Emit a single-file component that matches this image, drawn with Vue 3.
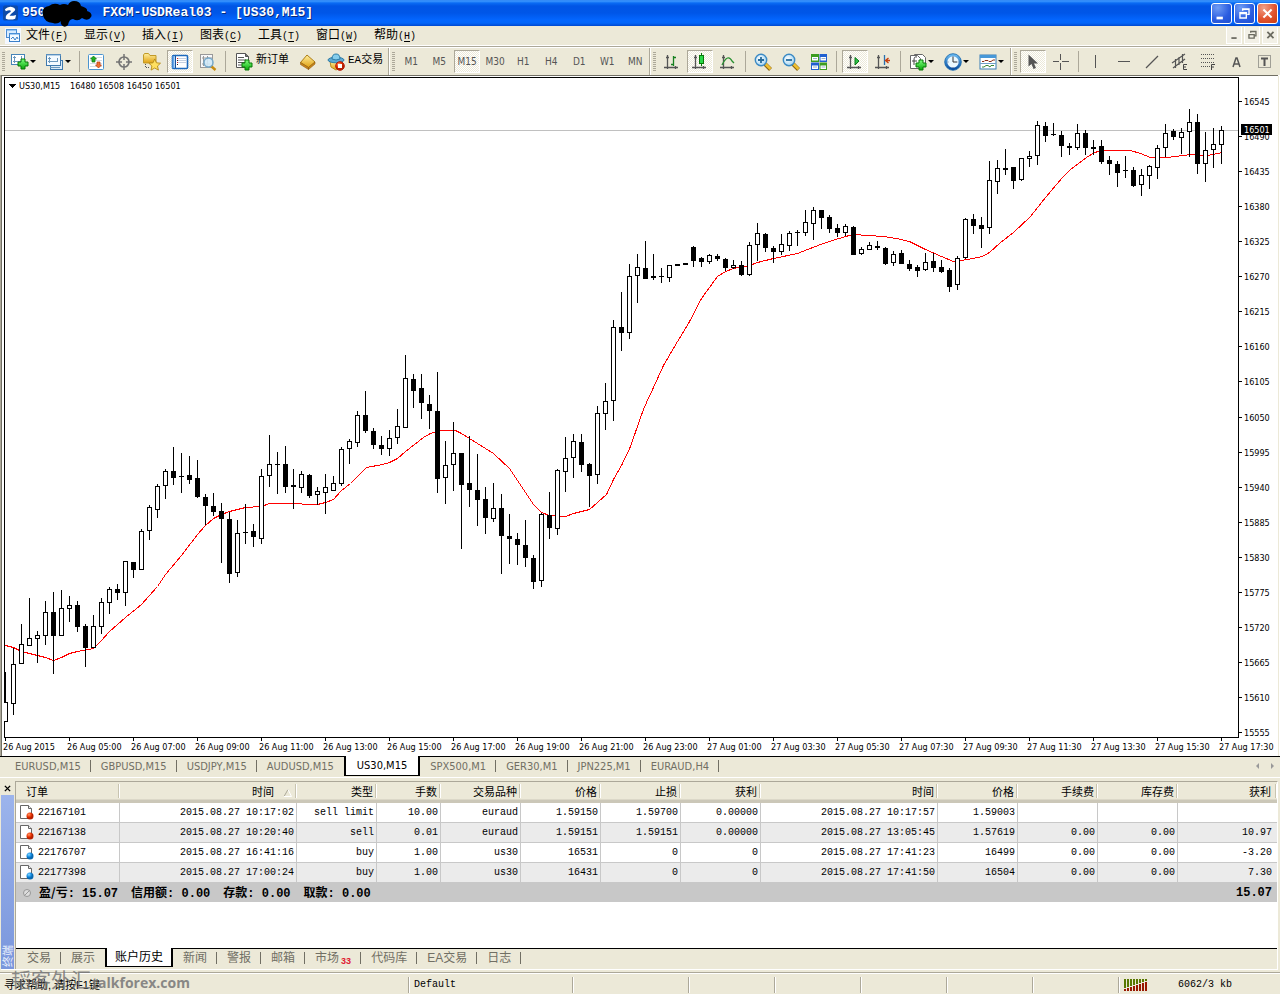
<script setup>
// Each candle: high, body top, body bottom, low, filled (1 = bearish)
const raw = `672 702 721 721 0|648 664 703 714 0|624 644 663 663 0|598 638 645 645 0|631 635 638 662 0|601 612 635 644 0|592 612 635 673 1|590 608 635 635 0|596 605 608 621 0|601 605 626 631 1|624 626 647 666 1|615 626 647 647 0|598 602 626 633 0|587 589 602 613 0|584 589 592 599 1|561 561 592 605 0|562 562 569 577 1|529 531 569 569 0|505 507 530 539 0|484 486 509 517 0|469 471 485 498 0|447 471 477 484 1|453 476 476 492 1|456 475 479 483 1|460 478 496 497 1|494 497 505 524 1|493 506 511 515 1|503 511 518 562 1|512 519 573 582 1|520 533 572 576 0|504 532 532 543 1|524 531 536 546 1|469 476 538 543 0|435 464 475 486 0|452 464 464 493 1|446 464 486 492 1|469 485 486 508 1|471 474 487 492 0|474 475 495 497 1|487 491 494 504 0|474 487 492 513 0|476 483 490 490 0|447 449 483 485 0|439 441 448 463 0|411 415 442 446 0|391 415 430 432 1|428 431 444 448 1|436 445 448 454 1|430 438 448 455 0|409 426 437 443 0|355 378 427 427 0|374 379 390 407 1|374 388 402 418 1|395 404 410 428 1|372 411 478 492 1|441 465 477 503 0|422 453 464 490 0|453 453 484 548 1|436 483 489 506 1|454 490 499 525 1|487 499 517 533 1|483 508 518 521 0|494 508 535 573 1|514 536 538 563 1|533 539 544 564 1|520 545 557 566 1|555 558 581 588 1|513 514 580 586 0|492 515 527 538 1|469 470 528 534 0|437 458 471 491 0|434 441 457 477 0|434 442 464 471 1|463 464 475 506 1|406 413 474 483 0|383 401 413 429 0|320 327 400 420 0|292 327 332 350 1|264 276 332 338 0|254 267 275 302 0|241 268 278 278 1|254 276 277 279 1|268 276 276 282 1|265 265 277 281 0|264 264 265 265 1|263 263 264 264 1|246 247 260 266 1|257 258 261 266 1|254 255 261 263 0|254 256 258 260 1|258 259 267 270 1|260 265 267 268 0|261 265 274 275 1|242 245 274 275 0|223 233 244 260 0|233 234 247 251 1|246 248 251 262 1|234 244 251 254 0|231 233 245 250 0|230 232 232 245 1|210 222 232 235 0|207 210 223 239 0|210 210 217 228 1|215 217 228 232 1|224 228 232 236 1|224 226 232 235 0|226 227 254 254 1|247 249 253 254 0|242 245 249 249 0|241 246 247 249 1|247 248 263 264 1|251 254 262 265 0|250 253 263 263 1|260 264 268 270 1|265 267 270 276 1|253 262 269 270 0|253 261 267 271 1|260 267 271 272 1|268 270 286 291 1|256 258 284 289 0|218 219 257 258 0|214 219 225 233 1|217 225 228 247 1|161 180 227 233 0|160 168 181 193 0|149 168 169 174 1|167 167 180 188 1|158 158 179 180 0|151 156 158 166 0|121 125 155 164 0|122 126 135 141 1|123 134 134 135 1|131 135 145 156 1|143 146 147 154 1|124 133 147 149 0|130 133 147 154 1|140 147 148 154 1|140 146 161 163 1|156 160 163 174 1|161 164 172 186 1|156 170 170 177 1|167 170 185 186 1|169 175 184 195 0|165 166 175 188 0|145 148 167 178 0|124 133 147 156 0|129 131 136 139 1|128 132 137 153 0|109 122 131 156 0|114 122 163 173 1|132 150 163 181 0|128 144 149 167 0|126 130 144 163 0`
const candles = raw.split('|').map((row, i) => {
  const [h, t, b, l, f] = row.split(' ').map(Number)
  return { x: 5 + i * 8, h, t, b, l, f }
})
const average = '5,645 13,647 21,651 29,653 37,655 45,657 53,660 61,657 69,653 77,651 93,648 101,640 109,631 125,617 141,604 157,586 165,574 181,555 197,534 205,525 213,518 221,514 229,511 245,507 261,506 269,503 285,503 317,504 325,502 333,499 341,490 350,483 366,467 382,464 389,462 397,458 405,451 423,437 430,433 440,430 455,430 461,433 469,438 493,453 509,468 525,492 533,504 541,512 549,515 565,516 573,513 589,509 597,502 606,494 613,479 621,465 630,446 639,420 643,409 646,402 653,387 663,365 677,341 688,323 701,298 717,276 725,271 733,268 749,265 757,262 773,258 797,253 820,244 832,240 845,236 853,234 883,236 896,238 909,241 925,249 941,256 953,261 967,259 982,256 989,252 1000,242 1013,232 1030,216 1045,197 1062,177 1070,169 1086,157 1094,152 1102,150 1130,150 1140,153 1150,157 1167,157 1190,154 1207,155 1222,152'
const prices = Array.from({ length: 19 }, (_, i) => ({ v: 16545 - i * 55, y: Math.round(101 + i * 35.06) }))
const times = ['26 Aug 2015', '26 Aug 05:00', '26 Aug 07:00', '26 Aug 09:00', '26 Aug 11:00', '26 Aug 13:00', '26 Aug 15:00', '26 Aug 17:00', '26 Aug 19:00', '26 Aug 21:00', '26 Aug 23:00', '27 Aug 01:00', '27 Aug 03:30', '27 Aug 05:30', '27 Aug 07:30', '27 Aug 09:30', '27 Aug 11:30', '27 Aug 13:30', '27 Aug 15:30', '27 Aug 17:30']

const menus = [['文件', 'F'], ['显示', 'V'], ['插入', 'I'], ['图表', 'C'], ['工具', 'T'], ['窗口', 'W'], ['帮助', 'H']]
const groups = [
  [{ i: 'newchart', d: 1 }, { i: 'profiles', d: 1 }, { s: 1, k: 'thin' }, { i: 'market' }, { i: 'target' }, { i: 'folder' }, { i: 'terminal', on: 1 }, { i: 'tester' }, { s: 1 }, { i: 'order', t: '新订单' }, { i: 'editor' }, { i: 'ea', t: 'EA交易' }],
  ['M1', 'M5', 'M15', 'M30', 'H1', 'H4', 'D1', 'W1', 'MN'].map(p => ({ p, on: p === 'M15' })),
  [{ i: 'bars' }, { i: 'candles', on: 1 }, { i: 'line' }, { s: 1, k: 'mid' }, { i: 'zoomin' }, { i: 'zoomout' }, { i: 'tile' }, { s: 1 }, { i: 'scroll', on: 1 }, { i: 'shift' }, { s: 1 }, { i: 'indicator', d: 1 }, { i: 'clock', d: 1 }, { i: 'template', d: 1 }],
  [{ i: 'cursor', on: 1 }, { i: 'cross' }, { s: 1, k: 'mid' }, { i: 'vline' }, { i: 'hline' }, { i: 'trend' }, { i: 'channel' }, { i: 'fibo' }, { i: 'text' }, { i: 'label' }]
]
const chartTabs = ['EURUSD,M15', 'GBPUSD,M15', 'USDJPY,M15', 'AUDUSD,M15', 'US30,M15', 'SPX500,M1', 'GER30,M1', 'JPN225,M1', 'EURAUD,H4']
const heads = ['订单', '时间', '类型', '手数', '交易品种', '价格', '止损', '获利', '时间', '价格', '手续费', '库存费', '获利']
const rows = [
  ['22167101', '2015.08.27 10:17:02', 'sell limit', '10.00', 'euraud', '1.59150', '1.59700', '0.00000', '2015.08.27 10:17:57', '1.59003', '', '', ''],
  ['22167138', '2015.08.27 10:20:40', 'sell', '0.01', 'euraud', '1.59151', '1.59151', '0.00000', '2015.08.27 13:05:45', '1.57619', '0.00', '0.00', '10.97'],
  ['22176707', '2015.08.27 16:41:16', 'buy', '1.00', 'us30', '16531', '0', '0', '2015.08.27 17:41:23', '16499', '0.00', '0.00', '-3.20'],
  ['22177398', '2015.08.27 17:00:24', 'buy', '1.00', 'us30', '16431', '0', '0', '2015.08.27 17:41:50', '16504', '0.00', '0.00', '7.30']
]
const totals = [['盈/亏', '15.07'], ['信用额', '0.00'], ['存款', '0.00'], ['取款', '0.00']]
const panelTabs = ['交易', '展示', '账户历史', '新闻', '警报', '邮箱', '市场', '代码库', 'EA交易', '日志']
</script>

<template>
  <div class="app">
    <svg class="defs" width="0" height="0" aria-hidden="true">
      <defs>
        <linearGradient id="g-green" x1="0" y1="0" x2="0" y2="1"><stop offset="0" stop-color="#7dff7d" /><stop offset="1" stop-color="#08a808" /></linearGradient>
        <linearGradient id="g-gold" x1="0" y1="0" x2="0" y2="1"><stop offset="0" stop-color="#fff0a0" /><stop offset="1" stop-color="#e0a010" /></linearGradient>
        <linearGradient id="g-blue" x1="0" y1="0" x2="0" y2="1"><stop offset="0" stop-color="#6ab8ee" /><stop offset="1" stop-color="#0a4fa0" /></linearGradient>
        <radialGradient id="g-lens" cx=".4" cy=".4"><stop offset="0" stop-color="#fff" /><stop offset="1" stop-color="#b4dcf4" /></radialGradient>
        <radialGradient id="g-red" cx=".35" cy=".3"><stop offset="0" stop-color="#ff9c70" /><stop offset=".6" stop-color="#f03c08" /><stop offset="1" stop-color="#b82000" /></radialGradient>
        <radialGradient id="g-dot" cx=".35" cy=".3"><stop offset="0" stop-color="#8cdcff" /><stop offset=".6" stop-color="#1890e8" /><stop offset="1" stop-color="#0868b0" /></radialGradient>
      </defs>
      <symbol id="plus" viewBox="0 0 12 12"><path d="M4 1h4v3h3v4H8v3H4V8H1V4h3z" fill="url(#g-green)" stroke="#087808" /></symbol>
      <symbol id="i-newchart" viewBox="0 0 18 18"><rect x=".5" y="1.500" width="13" height="10" fill="#fff" stroke="#4684b8" /><path d="M3.500 3v7M2 4.500h3M2 8.500h9M10.500 3v4" stroke="#6c98bc" fill="none" /><use href="#plus" x="6" y="5" width="12" height="12" /></symbol>
      <symbol id="i-profiles" viewBox="0 0 18 18"><rect x="4.500" y="7.500" width="12" height="9" fill="#dcecf8" stroke="#3f79ad" /><rect x=".5" y="1.500" width="14" height="11" fill="#f4faff" stroke="#3f79ad" /><path d="M0 2h15" stroke="#78a8d0" /><path d="M3.500 4v6M2 5.500h3M2 8.500h10M11.500 5v4M4 14.500h10" stroke="#6c98bc" fill="none" /></symbol>
      <symbol id="i-market" viewBox="0 0 18 18"><rect x="1.500" y="1.500" width="15" height="15" rx="1" fill="#fff" stroke="#4b94cf" /><path d="M3 4.500h12M3 7.500h12M3 10.500h12M3 13.500h12" stroke="#d4dce4" /><path d="M6.500 3L9.500 6H8v3H5V6H3.500z" fill="#20b020" stroke="#107810" stroke-width=".7" /><path d="M11.500 15l-3-3H10V9h3v3h1.500z" fill="#f07030" stroke="#b83808" stroke-width=".7" /></symbol>
      <symbol id="i-target" viewBox="0 0 18 18"><circle cx="9" cy="9" r="5" fill="none" stroke="#747474" stroke-width="1.700" /><path d="M9 1v6M9 11v6M1 9h6M11 9h6" stroke="#747474" stroke-width="1.500" /></symbol>
      <symbol id="i-folder" viewBox="0 0 18 18"><path d="M.5 10V2l1-1.500h4L7 2.500h6v7.500z" fill="url(#g-gold)" stroke="#c19a28" /><path d="M2.500 11v3.500H7" stroke="#555" stroke-dasharray="1 1" fill="none" /><path d="M12.500 5.500l1.700 3.800 4.100.4-3 2.800.9 4.100-3.700-2.100-3.700 2.100.9-4.100-3-2.800 4.100-.4z" transform="translate(-.8 .5)" fill="#ffe060" stroke="#b48a18" stroke-width=".9" /></symbol>
      <symbol id="i-terminal" viewBox="0 0 18 18"><rect x="1.500" y="2.500" width="15" height="13" rx="1" fill="#fff" stroke="#1c69bd" stroke-width="1.600" /><path d="M2.500 3v12" stroke="#66a6e8" stroke-width="2" /><path d="M4.500 3v12" stroke="#174f99" /><path d="M7 5.500h8M7 7.500h8M7 9.500h8" stroke="#c5d0e0" /><path d="M6 5.500h1M6 9.500h1" stroke="#e02020" /><path d="M6 7.500h1M6 11.500h1" stroke="#222" /></symbol>
      <symbol id="i-tester" viewBox="0 0 18 18"><rect x="1.500" y="1.500" width="12" height="13" fill="#f8f8f8" stroke="#999" /><path d="M3 5h10M3 11h8M4.500 3v10M8.500 3v10" stroke="#999" /><path d="M12 13l4.500 4" stroke="#c88c10" stroke-width="2.500" /><circle cx="9.500" cy="9.500" r="4.500" fill="#cfe8f6" fill-opacity=".9" stroke="#76a9ca" stroke-width="1.500" /></symbol>
      <symbol id="i-order" viewBox="0 0 18 18"><path d="M1.500.5h9l3 3v11h-12z" fill="#fff" stroke="#555" /><path d="M10.500.5v3h3" fill="#777" stroke="#555" /><path d="M3 4.500h6M3 7h8M3 9.500h8M3 12h4" stroke="#555" stroke-width="1.200" /><use href="#plus" x="6" y="6" width="12" height="12" /></symbol>
      <symbol id="i-editor" viewBox="0 0 18 18"><path d="M1.500 9.500L8 2l8 7-6.500 5.500z" fill="url(#g-gold)" stroke="#ad7d16" /><path d="M1.500 9.500v2l8 5v-2zM9.500 14.500l6.500-5.500v2L9.500 16.500z" fill="#d08818" stroke="#8b5a10" stroke-width=".6" /></symbol>
      <symbol id="i-ea" viewBox="0 0 18 18"><path d="M3 8h12l-2 7-4 2-5-3z" fill="url(#g-gold)" stroke="#b98a20" /><ellipse cx="9" cy="7" rx="8" ry="2.800" fill="#5ea9d3" stroke="#2d7ca6" /><path d="M5 6q0-5 4-5t4 5q-4 2-8 0" fill="#85cdec" stroke="#2d7ca6" /><circle cx="13" cy="13" r="4.300" fill="url(#g-red)" stroke="#b41808" /><rect x="11" y="11" width="4" height="4" fill="#fff" /></symbol>
      <symbol id="axis" viewBox="0 0 18 18"><path d="M4.500 2v14M1 14.500h14M3 4.500h3M12.500 13v3" stroke="#555" fill="none" stroke-width="1.300" /></symbol>
      <symbol id="i-bars" viewBox="0 0 18 18"><use href="#axis" width="18" height="18" /><path d="M10.500 3v10M8 11.500h2.500M10.500 4.500H13" stroke="#168020" stroke-width="1.300" /></symbol>
      <symbol id="i-candles" viewBox="0 0 18 18"><use href="#axis" width="18" height="18" /><path d="M10.500 0v13" stroke="#087808" /><rect x="8.500" y="2.500" width="4" height="8" fill="#28d848" stroke="#087808" /></symbol>
      <symbol id="i-line" viewBox="0 0 18 18"><use href="#axis" width="18" height="18" /><path d="M3 12q6-12 10-4l2 2" stroke="#289030" fill="none" stroke-width="1.300" /></symbol>
      <symbol id="lens" viewBox="0 0 18 18"><path d="M11 11l5.500 5.500" stroke="#8c6410" stroke-width="4" /><path d="M11.500 11l5 5" stroke="#f0c030" stroke-width="2.500" /><circle cx="7" cy="7" r="5.700" fill="url(#g-lens)" stroke="#3b8ac4" stroke-width="1.400" /></symbol>
      <symbol id="i-zoomin" viewBox="0 0 18 18"><use href="#lens" width="18" height="18" /><path d="M7 4v6M4 7h6" stroke="#286c9c" stroke-width="1.800" /></symbol>
      <symbol id="i-zoomout" viewBox="0 0 18 18"><use href="#lens" width="18" height="18" /><path d="M4 7h6" stroke="#286c9c" stroke-width="1.800" /></symbol>
      <symbol id="i-tile" viewBox="0 0 18 18"><path d="M1 1h8v8H1zM9.500 9.500H17V17H9.500z" fill="#3c9c20" /><path d="M9.500 1H17v8H9.500zM1 9.500h8V17H1z" fill="#2060d0" /><path d="M2 4h6v3.500H2zM10.500 4H16v3.500h-5.500zM2 12.500h6V16H2zM10.500 12.500H16V16h-5.500z" fill="#fff" /><path d="M3 5.500h4M11.500 5.500h4M3 14h4M11.500 14h4" stroke="#9ab0c8" /></symbol>
      <symbol id="i-scroll" viewBox="0 0 18 18"><use href="#axis" width="18" height="18" /><path d="M9 4.500l4 3.500-4 4z" fill="#30c048" stroke="#087818" /></symbol>
      <symbol id="i-shift" viewBox="0 0 18 18"><use href="#axis" width="18" height="18" /><path d="M10.500 2v10" stroke="#2870b0" stroke-width="1.300" /><path d="M16 7.500h-4M14.500 5l-3 2.500 3 2.500" stroke="#c84010" fill="none" stroke-width="1.400" /></symbol>
      <symbol id="i-indicator" viewBox="0 0 18 18"><path d="M5.500 4.500V1.500h8l3 3v9h-5" fill="#fff" stroke="#666" /><path d="M1.500 2.500h7l3 3v10h-10z" fill="#fff" stroke="#666" /><path d="M8 4q-3-1-3 3v5M3 8h5" stroke="#444" fill="none" /><use href="#plus" x="6" y="6" width="12" height="12" /></symbol>
      <symbol id="i-clock" viewBox="0 0 18 18"><circle cx="9" cy="9" r="7" fill="#eaf8ff" stroke="url(#g-blue)" stroke-width="2.600" /><circle cx="9" cy="9" r="8.300" fill="none" stroke="#0d63ad" stroke-width=".8" /><path d="M9 4v5h4" stroke="#333" fill="none" /><path d="M9 3v1M9 14v1M3.500 9h1M13.500 9h1" stroke="#679" /></symbol>
      <symbol id="i-template" viewBox="0 0 18 18"><rect x="1" y="2" width="16" height="14" fill="#fff" stroke="#397fb6" /><path d="M1 2h16v3H1z" fill="#4898d8" /><path d="M1 10.500h16" stroke="#6fa0c8" /><path d="M3 8.500h2l1-1h3l1 1h2l2-1.500h2" stroke="#8c3018" fill="none" /><path d="M3 14h2l2-1.500h2l2 1.500 1-1.500h3" stroke="#388838" fill="none" /></symbol>
      <symbol id="i-cursor" viewBox="0 0 18 18"><path d="M4.500 1.500v12l3-2.500 2 5 2.500-1-2-4.500h4z" fill="#555" /></symbol>
      <symbol id="i-cross" viewBox="0 0 18 18"><path d="M8.500 1v6M8.500 10v7M1 8.500h6M10 8.500h7" stroke="#555" /></symbol>
      <symbol id="i-vline" viewBox="0 0 18 18"><path d="M8.500 2v13" stroke="#555" /></symbol>
      <symbol id="i-hline" viewBox="0 0 18 18"><path d="M3 8.500h12" stroke="#555" /></symbol>
      <symbol id="i-trend" viewBox="0 0 18 18"><path d="M3 15L15 3" stroke="#555" stroke-width="1.200" /></symbol>
      <symbol id="i-channel" viewBox="0 0 18 18"><path d="M1 10L14 1M2 15L14 6M4.500 6v9M8 4v8M11.500 1v9" stroke="#555" stroke-width="1.200" /><path d="M16 11.500h-3.500v5H16M12.500 14H15" stroke="#444" fill="none" /></symbol>
      <symbol id="i-fibo" viewBox="0 0 18 18"><path d="M2 1.500h14M2 5.500h14M2 9.500h14M2 13.500h9" stroke="#555" stroke-dasharray="1 1" /><path d="M16 11.500h-3.500V17M12.500 14H15" stroke="#444" fill="none" /></symbol>
      <symbol id="i-text" viewBox="0 0 18 18"><path d="M6 14L9 5h1L13 14M7 11h5" stroke="#555" stroke-width="1.500" fill="none" /></symbol>
      <symbol id="i-label" viewBox="0 0 18 18"><rect x="3.500" y="2.500" width="12" height="12" fill="none" stroke="#555" stroke-dasharray="1 1" /><path d="M6 5.500h7M9.500 5.500V13" stroke="#555" stroke-width="2" /></symbol>
      <symbol id="i-doc" viewBox="0 0 16 16"><path d="M1.500 1.500h8l3 3v10h-11z" fill="#fff" stroke="#666" /><path d="M9.500 1.500v3h3" fill="#eee" stroke="#666" /></symbol>
    </svg>

    <header class="title">
      <svg class="logo" viewBox="0 0 16 16"><rect width="16" height="16" rx="2" fill="#0d4aa8" /><path d="M2 4q4-4 9-2 4 2 0 5-3 2-4 4 4 0 7-1l-1 4q-5 2-10 0-1-4 5-7 1-2-1-2-2 0-4 1z" fill="#fff" /></svg>
      <h1>950<span class="hidden-digits"></span>FXCM-USDReal03 - [US30,M15]</h1>
      <svg class="scribble" viewBox="0 0 50 28"><path d="M1 15q-2-8 6-9 5-4 11-1 4-2 8 0 2-4 6-4 6 0 7 5 7 2 6 5 6 2 4 6-3 5-9 1-4 4-9 1-4 0-5 6-4 4-7-1-1-3 1-4-4 5-9 3-9-1-10-8z" fill="#000" /></svg>
      <div class="wins">
        <button aria-label="最小化"><svg viewBox="0 0 21 21"><path d="M5 15.500h7" stroke="#fff" stroke-width="3" /></svg></button>
        <button aria-label="还原"><svg viewBox="0 0 21 21"><path d="M8.500 7.500v-2h7v6h-2M8 6h8M5.500 9.500h7v6h-7zM5 10.500h8" stroke="#fff" fill="none" stroke-width="1.500" /></svg></button>
        <button class="close" aria-label="关闭"><svg viewBox="0 0 21 21"><path d="M6 6l9 9M15 6l-9 9" stroke="#fff" stroke-width="2.200" /></svg></button>
      </div>
    </header>

    <nav class="menu">
      <svg class="mico" viewBox="0 0 16 16"><rect width="16" height="16" fill="#f4f8ff" /><rect x="1.500" y="1.500" width="10" height="8" fill="#d8ecff" stroke="#4a8cd0" /><rect x="4.500" y="5.500" width="10" height="8" fill="#f4faff" stroke="#3a80c8" /><path d="M4 6h11M1 2h11" stroke="#58a0e8" /><path d="M6 11l2-2 2 3 2-3 1 2" stroke="#3a80c8" fill="none" /></svg>
      <button v-for="m in menus" :key="m[1]">{{ m[0] }}<span class="mono">(<u>{{ m[1] }}</u>)</span></button>
      <div class="mdi">
        <button aria-label="最小化窗口"><svg viewBox="0 0 16 16"><path d="M5 11.500h6" stroke="#6a6a60" stroke-width="2" /></svg></button>
        <button aria-label="还原窗口"><svg viewBox="0 0 16 16"><path d="M6.500 5.500V4h6v5H11M6 4h7M4.500 7.500h6v4h-6zM4 7.500h7" stroke="#6a6a60" fill="none" stroke-width="1.500" /></svg></button>
        <button aria-label="关闭窗口"><svg viewBox="0 0 16 16"><path d="M5 4.500l7 7M12 4.500l-7 7" stroke="#6a6a60" stroke-width="2" /></svg></button>
      </div>
    </nav>

    <div class="tools">
      <div v-for="(g, gi) in groups" :key="gi" class="group" :class="'g' + gi">
        <i class="grip"></i>
        <template v-for="(b, bi) in g" :key="bi">
          <i v-if="b.s" class="sep" :class="b.k"></i>
          <button v-else :class="{ on: b.on, drop: b.d, wide: b.t }" :aria-label="b.i">
            <svg v-if="b.i" class="ico"><use :href="'#i-' + b.i" /></svg>
            <span v-if="b.t" class="cap">{{ b.t }}</span>
            <span v-if="b.p">{{ b.p }}</span>
            <i v-if="b.d" class="arrow"></i>
          </button>
        </template>
      </div>
    </div>

    <main class="chart">
      <svg viewBox="0 75 1280 681" class="plot" role="img" aria-label="US30,M15">
        <g shape-rendering="crispEdges">
          <path d="M0 75h1278" stroke="#716f64" stroke-width="2" />
          <path d="M.5 75v681" stroke="#aca899" /><path d="M1.500 76v680" stroke="#716f64" />
          <path d="M1278.500 76v680" stroke="#ece9d8" />
          <path d="M5 130.500h1234" stroke="#c0c0c0" />
          <path d="M4.500 738V77.500h1234V737.500H4" stroke="#000" fill="none" />
          <path v-for="p in prices" :key="p.v" :d="`M1239 ${p.y + 0.5}h3`" stroke="#000" />
          <path v-for="(t, i) in times" :key="t" :d="`M${5.5 + i * 64} 738v3`" stroke="#000" />
          <polyline :points="average" transform="translate(0.5 0.5)" stroke="#f00" fill="none" />
          <g v-for="c in candles" :key="c.x">
            <rect :x="c.x" :y="c.h" width="1" :height="c.l - c.h + 1" />
            <rect v-if="c.f" :x="c.x - 2" :y="c.t" width="5" :height="c.b - c.t + 1" />
            <rect v-else :x="c.x - 1.5" :y="c.t + 0.5" width="4" :height="Math.max(c.b - c.t, 1)" fill="#fff" stroke="#000" />
          </g>
          <path d="M0 672h4v50H0z" fill="#fff" /><path d="M.5 670v54" stroke="#aca899" /><path d="M1.500 670v54" stroke="#716f64" />
          <path d="M8 84h8l-4 4z" />
        </g>
        <text x="19" y="89">US30,M15</text><text x="70" y="89">16480 16508 16450 16501</text>
        <text v-for="p in prices" :key="p.v" x="1244" :y="p.y + 4">{{ p.v }}</text>
        <rect x="1241" y="124" width="31" height="11" /><text x="1244" y="133" class="now">16501</text>
        <text v-for="(t, i) in times" :key="t" :x="3 + i * 64" y="750">{{ t }}</text>
      </svg>
    </main>

    <div class="ctabs">
      <button v-for="t in chartTabs" :key="t" :class="{ act: t === 'US30,M15' }">{{ t }}</button>
      <div class="arrows"><i class="la"></i><i class="ra"></i></div>
    </div>

    <section class="term">
      <aside>
        <button aria-label="关闭终端"><svg viewBox="0 0 8 8"><path d="M1 1l6 6M7 1L1 7" stroke="#000" stroke-width="1.600" /></svg></button>
        <div class="strip"><span>终端</span></div>
      </aside>
      <div class="panel">
        <table>
          <colgroup><col class="c104"><col class="c177"><col class="c80"><col class="c64"><col v-for="n in 4" :key="n" class="c80"><col class="c177"><col v-for="n in 3" :key="'b' + n" class="c80"><col></colgroup>
          <thead><tr><th v-for="(h, i) in heads" :key="i" :class="{ sorted: i === 1 }">{{ h }}<svg v-if="i === 1" viewBox="0 0 8 8"><path d="M0 7.500L4 .5" stroke="#aca899" /><path d="M4 .5L7.500 7.500H0" stroke="#fff" fill="none" /></svg></th></tr></thead>
          <tbody>
            <tr v-for="(r, ri) in rows" :key="r[0]">
              <td v-for="(c, ci) in r" :key="ci"><svg v-if="!ci" class="doc" viewBox="0 0 16 16"><use href="#i-doc" width="16" height="16" /><circle cx="11" cy="12" r="3.500" :fill="ri < 2 ? 'url(#g-red)' : 'url(#g-dot)'" /></svg>{{ c }}</td>
            </tr>
            <tr class="sum"><td colspan="12"><div><i class="nil"></i><span v-for="t in totals" :key="t[0]"><span class="cjk">{{ t[0] }}</span>: {{ t[1] }}</span></div></td><td>15.07</td></tr>
          </tbody>
        </table>
        <div class="ptabs">
          <button v-for="t in panelTabs" :key="t" :class="{ act: t === '账户历史' }">{{ t }}<b v-if="t === '市场'">33</b></button>
        </div>
      </div>
    </section>

    <footer>
      <div class="help">寻求帮助, 请按F1键</div>
      <div class="mono">Default</div><div class="w116"></div><div v-for="n in 5" :key="n" class="w86"></div>
      <div class="net"><svg viewBox="0 0 24 12"><template v-for="n in 8" :key="n"><rect :x="n * 3 - 3" y="0" width="2" :height="10 - n" fill="#587800" /><rect :x="n * 3 - 3" :y="11 - n" width="2" :height="n + 1" fill="#981800" /></template></svg><span class="mono">6062/3 kb</span></div>
      <div class="mark"><span>韬客外汇</span>talkforex.com</div>
    </footer>
  </div>
</template>

<style>
body { margin: 0; background: #ece9d8; }
</style>
<style scoped>
.app { min-height: 100vh; display: flex; flex-direction: column; background: #ece9d8; color: #000; font: 12px/16px "Liberation Sans", "Noto Sans CJK SC", sans-serif; }
.defs { display: block; height: 0; }
button { border: 0; background: none; padding: 0; margin: 0; font: inherit; color: inherit; }
svg { display: block; flex: none; }
.mono { font-family: "Liberation Mono", monospace; font-size: 10px; }
.title { position: relative; height: 26px; display: flex; align-items: center; padding: 0 2px 0 3px; background: linear-gradient(#2a80f0 0, #3c98ff 1px, #0a6cf4 3px, #0055e5 6px, #0056e8 13px, #0366ff 20px, #0366fa 23px, #0048d0 26px); }
.logo { width: 15px; height: 16px; margin-right: 4px; }
h1 { margin: 0; flex: 1; color: #fff; font: bold 13px/16px "Liberation Mono", monospace; text-shadow: 1px 1px #06297a; }
.hidden-digits { display: inline-block; width: 57px; }
.scribble { position: absolute; left: 42px; top: 0; width: 50px; height: 28px; }
.wins { display: flex; gap: 2px; }
.wins button { width: 21px; height: 21px; border: 1px solid #fff; border-radius: 3px; box-sizing: border-box; background: radial-gradient(circle at 30% 20%, #6f9cf4, #2a5ce0 60%, #1f4fd0); }
.wins button svg { width: 19px; height: 19px; }
.wins .close { background: radial-gradient(circle at 30% 20%, #f0a088, #e25430 55%, #c83c10); }
.menu { height: 20px; display: flex; align-items: center; gap: 16px; padding: 0 2px 0 5px; border-bottom: 1px solid #fff; box-shadow: 0 1px #aca899; margin-bottom: 1px; box-sizing: border-box; }
.mico { width: 16px; height: 16px; margin-right: -11px; }
.menu > button { width: 42px; white-space: nowrap; text-align: left; line-height: 16px; }
.menu u { text-underline-offset: 2px; }
.mdi { margin-left: auto; display: flex; gap: 2px; }
.mdi button { width: 16px; height: 17px; border-right: 1px solid #fff; border-bottom: 1px solid #fff; border-left: 1px solid #fff; box-sizing: border-box; background: #f2f0e6; }
.mdi svg { width: 14px; height: 16px; }
.tools { display: flex; height: 28px; border-top: 1px solid #fff; box-sizing: border-box; }
.group { display: flex; align-items: center; box-sizing: border-box; border-right: 1px solid #aca899; }
.group + .group { border-left: 1px solid #fff; }
.g3 { flex: 1; border-right: 0; }
.grip { width: 3px; height: 19px; margin: 0 2px; background: repeating-linear-gradient(#aca899 0 1px, transparent 1px 2px); }
.tools button { width: 26px; height: 23px; margin: 0 1px; display: flex; align-items: center; justify-content: center; box-sizing: border-box; color: #555; font: 10px/16px "DejaVu Sans Condensed", "DejaVu Sans", sans-serif; }
.tools .on { border: 1px solid; border-color: #aca899 #fff #fff #aca899; background: repeating-conic-gradient(#fff 0 25%, #ece9d8 0 50%) 0 0 / 2px 2px; }
.ico { width: 18px; height: 18px; }
.tools .drop { width: 33px; justify-content: flex-start; padding-left: 3px; gap: 1px; }
.tools .wide { width: auto; padding: 0 4px; gap: 3px; }
.cap { font: 11px/16px "Liberation Mono", "Noto Sans CJK SC", sans-serif; color: #000; white-space: nowrap; margin-bottom: 4px; }
.arrow { border: 3px solid transparent; border-top-color: #000; border-bottom: 0; }
.sep { width: 1px; height: 21px; background: #aca899; margin: 0 4px 0 3px; }
.sep.thin { margin: 0 2px; }
.sep.mid { margin: 0 3px; }
.chart { background: #fff; }
.plot { width: 100%; height: auto; }
.plot text { font: 9px "DejaVu Sans Condensed", "DejaVu Sans", sans-serif; }
.plot .now { fill: #fff; }
.ctabs { height: 22px; display: flex; align-items: flex-start; color: #716f64; font: 11px/19px "DejaVu Sans Condensed", "DejaVu Sans", sans-serif; border-top: 1px solid #000; border-bottom: 1px solid #fff; padding-left: 5px; box-sizing: border-box; }
.ctabs button, .ptabs button { padding: 0 10px; position: relative; }
.ctabs button::after, .ptabs button::after { content: ""; position: absolute; right: 0; top: 3px; height: 12px; border-right: 1px solid #716f64; }
.ctabs .act, .ptabs .act { background: #fff; color: #000; border: solid #000; border-width: 0 2px 1px; margin-top: -1px; }
.ctabs .act { padding: 0 11px; }
.ctabs .act::after, .ptabs .act::after, .ctabs button:has(+ .act)::after, .ptabs button:has(+ .act)::after { display: none; }
.arrows { margin: 6px 6px 0 auto; display: flex; gap: 12px; }
.arrows i { border: 3px solid transparent; }
.arrows .la { border-left: 0; border-right-color: #999; }
.arrows .ra { border-right: 0; border-left-color: #999; }
.term { flex: 1; display: flex; margin: 3px 2px 2px 1px; border-bottom: 1px solid #fff; }
aside { width: 14px; display: flex; flex-direction: column; }
aside button { height: 14px; padding-left: 3px; }
aside svg { width: 7px; height: 7px; }
.strip { flex: 1; width: 13px; background: linear-gradient(#9cb4ec, #7a96dc); display: flex; align-items: flex-end; justify-content: center; color: #e8eefc; }
.strip span { writing-mode: vertical-rl; text-orientation: sideways; transform: rotate(180deg); font: 11px/13px "Noto Sans CJK SC", sans-serif; padding-top: 2px; }
.panel { flex: 1; min-width: 0; background: #fff; border: 1px solid #aca899; border-right-color: #fff; border-bottom: 0; display: flex; flex-direction: column; }
table { width: 100%; table-layout: fixed; border-collapse: separate; border-spacing: 0; font: 10px/16px "Liberation Mono", monospace; }
.c104 { width: 104px; } .c177 { width: 177px; } .c80 { width: 80px; } .c64 { width: 64px; }
th { height: 18px; padding: 0 4px 3px 0; text-align: right; font: 11px/16px "Noto Sans CJK SC", sans-serif; background: linear-gradient(90deg, transparent calc(100% - 2px), #c8c4b0 0 calc(100% - 1px), #fff 0) 0 2px / 100% 14px no-repeat, linear-gradient(#ece9d8 17px, #cbc7b8 18px); }
th:first-child { text-align: left; padding-left: 10px; }
th:last-child { padding-right: 6px; }
th.sorted svg { width: 8px; height: 8px; display: inline-block; margin: 0 1px 0 10px; vertical-align: -1px; }
td { height: 19px; padding: 0 2px 0 0; text-align: right; white-space: nowrap; border-right: 1px solid #c8c8c8; border-bottom: 1px solid #c8c8c8; }
tr:nth-child(2n) td { background: #ebebeb; }
td:last-child { border-right: 0; padding-right: 5px; }
td:first-child { text-align: left; }
.doc { width: 16px; height: 16px; display: inline-block; vertical-align: middle; margin: 0 3px 0 3px; }
.sum td { background: #c8c8c8; border: 0; font-weight: bold; font-size: 12px; }
.sum div { display: flex; align-items: center; gap: 13px; padding-left: 7px; }
.sum .nil { width: 6px; height: 6px; border: 1px solid #999; border-radius: 50%; background: linear-gradient(135deg, #ddd 45%, #999 45% 55%, #ddd 55%); margin-right: -5px; }
.cjk { font-family: "Noto Sans CJK SC", sans-serif; }
.ptabs { margin-top: auto; height: 20px; display: flex; background: #ece9d8; border-top: 1px solid #000; color: #716f64; line-height: 19px; padding-left: 1px; font-family: "Liberation Sans", "Noto Sans CJK SC", sans-serif; }
.ptabs button { height: 19px; }
.ptabs .act { padding: 0 8px; }
.ptabs b { color: #e02030; font-size: 9px; margin-left: 2px; position: relative; top: 2px; }
footer { position: relative; height: 22px; display: flex; align-items: center; border-top: 1px solid #aca899; box-shadow: inset 0 1px #fff; box-sizing: border-box; }
footer > div { height: 16px; line-height: 16px; margin-top: 2px; }
footer > div + div:not(.mark) { border-left: 1px solid #aca899; box-shadow: inset 1px 0 #fff; box-sizing: border-box; }
.help { flex: 1; padding-left: 4px; font-size: 11px; white-space: nowrap; }
footer > .mono { width: 164px; padding-left: 5px; }
.w116 { width: 116px; } .w86 { width: 86px; }
.net { width: 162px; display: flex; align-items: center; gap: 30px; padding-left: 5px; }
.net svg { width: 24px; height: 12px; }
footer > .mark { position: absolute; left: 11px; bottom: 4px; height: 20px; color: #777; font: bold 14px/20px "Open Sans", sans-serif; opacity: .85; white-space: nowrap; }
.mark span { font: 20px/20px "Noto Sans CJK SC", sans-serif; margin-right: 1px; }
</style>
